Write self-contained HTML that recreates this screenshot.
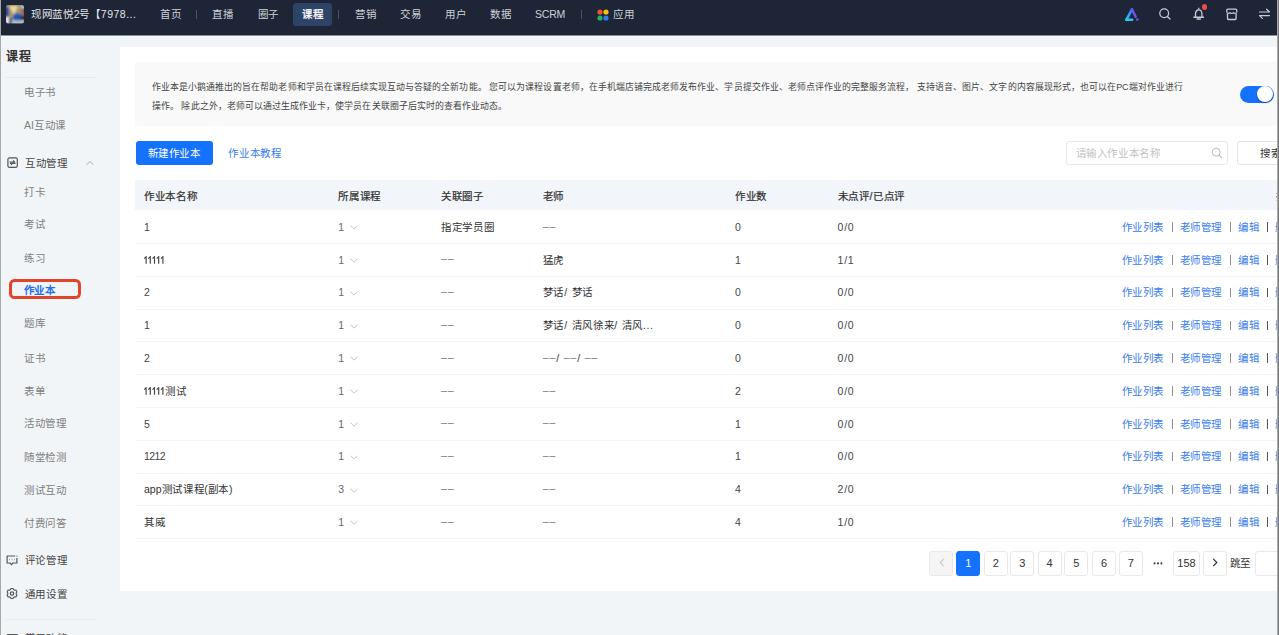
<!DOCTYPE html>
<html lang="zh-CN"><head><meta charset="utf-8">
<style>
*{box-sizing:border-box;margin:0;padding:0}
html,body{width:1279px;height:635px;overflow:hidden}
body{position:relative;background:#f2f5f8;font-family:"Liberation Sans",sans-serif;color:#333;font-size:10.5px;letter-spacing:0.66px}
.a{position:absolute;white-space:nowrap}
.t{position:absolute;white-space:nowrap;line-height:14px;height:14px;margin-top:-0.2px}
#nav{position:absolute;left:0;top:0;width:1279px;height:35px;background:#1d2536}
.nv{position:absolute;top:6.5px;margin-top:0.3px;line-height:14px;font-size:10.5px;letter-spacing:0.66px;color:#cdd1d8}
.sep{position:absolute;top:10px;width:1px;height:9px;background:#4a5263}
.side{color:#808080}
.grp{color:#444}
#card{position:absolute;left:120px;top:47px;width:1157px;height:543.5px;background:#fff}
#desc{position:absolute;left:135px;top:62px;width:1142px;height:63.5px;background:#f9f9f9}
.row{position:absolute;left:135px;width:1142px;height:32.86px;border-bottom:1px solid #f0f0f0}
.cell{position:absolute;white-space:nowrap;line-height:14px;color:#333;margin-top:0.1px}
.hd{-webkit-text-stroke:0.22px #333}
.dd{letter-spacing:0.9px;position:relative;top:-1.2px;color:#777}
.sl{letter-spacing:0.8px}
.lk{color:#3b7cf0}
.pipe{position:absolute;width:1.4px;height:9.5px;background:#929292}
.pg{position:absolute;top:551px;height:24.5px;width:24px;border:1px solid #e9e9e9;border-radius:3px;background:#fff;text-align:center;line-height:22.5px;font-size:11px;letter-spacing:0;color:#333}
</style></head><body>

<!-- NAV -->
<div id="nav">
  <svg class="a" style="left:6px;top:5px" width="18" height="18.5" viewBox="0 0 18 18.5">
    <defs><filter id="bl" filterUnits="userSpaceOnUse" x="-2" y="-2" width="22" height="22.5"><feGaussianBlur stdDeviation="0.9"/></filter><clipPath id="cp"><rect x="0" y="0" width="18" height="18.5" rx="2"/></clipPath></defs>
    <g clip-path="url(#cp)"><g filter="url(#bl)">
    <rect x="-1" y="-1" width="20" height="20.5" fill="#a8946c"/>
    <polygon points="3,1 12,1 8,10" fill="#e6d8a6"/>
    <rect x="-1" y="2" width="4" height="11" fill="#2c4d9c"/>
    <rect x="-1" y="12" width="4" height="7" fill="#e6ecf6"/>
    <ellipse cx="11.5" cy="12" rx="4.8" ry="3.8" fill="#1d58b8"/>
    <rect x="15" y="2" width="4" height="9" fill="#8a6c60"/>
    <rect x="15" y="1" width="4" height="2" fill="#c8d8f0"/>
    <rect x="14.5" y="11" width="4.5" height="4" fill="#1b2234"/>
    <rect x="5" y="15.5" width="14" height="4" fill="#b4c0d4"/>
    <rect x="3" y="13" width="2.5" height="6" fill="#24355e"/>
    </g></g>
  </svg>
  <div class="nv" style="left:31px;top:6.5px;color:#e4e6ea">现网蓝悦<span style="letter-spacing:0">2</span>号【<span style="letter-spacing:0.5px">7978...</span></div>
  <div class="nv" style="left:160px">首页</div>
  <div class="sep" style="left:196px"></div>
  <div class="nv" style="left:212px">直播</div>
  <div class="nv" style="left:257.5px">圈子</div>
  <div class="a" style="left:293px;top:2.5px;width:38.5px;height:23.5px;border-radius:3.5px;background:#2e4467"></div>
  <div class="nv" style="left:302px;color:#fff;-webkit-text-stroke:0.3px #fff">课程</div>
  <div class="sep" style="left:338px"></div>
  <div class="nv" style="left:355px">营销</div>
  <div class="nv" style="left:400px">交易</div>
  <div class="nv" style="left:445px">用户</div>
  <div class="nv" style="left:490px">数据</div>
  <div class="nv" style="left:535px;margin-top:0.4px;letter-spacing:-0.2px">SCRM</div>
  <div class="sep" style="left:581px"></div>
  <svg class="a" style="left:597px;top:9px" width="12" height="12" viewBox="0 0 12 12">
    <circle cx="3" cy="3" r="2.6" fill="#f0533a"/><circle cx="9" cy="3" r="2.6" fill="#f7c100"/>
    <circle cx="3" cy="9" r="2.6" fill="#21b35b"/><circle cx="9" cy="9" r="2.6" fill="#2f7bf5"/>
  </svg>
  <div class="nv" style="left:613px">应用</div>

  <!-- right icons -->
  <svg class="a" style="left:1124px;top:7px" width="16" height="15" viewBox="0 0 16 15">
    <defs><linearGradient id="lg" x1="0" y1="1" x2="1" y2="0"><stop offset="0" stop-color="#22d0f7"/><stop offset="1" stop-color="#4a6cf6"/></linearGradient></defs>
    <defs><linearGradient id="lg2" x1="0" y1="0" x2="0" y2="1"><stop offset="0" stop-color="#5a5cf6"/><stop offset="1" stop-color="#7a48f2"/></linearGradient></defs>
    <path d="M2.4 12.8 L7.9 2.4" fill="none" stroke="url(#lg)" stroke-width="2.5" stroke-linecap="round"/>
    <path d="M7.9 2.4 L11.6 9.6" fill="none" stroke="url(#lg2)" stroke-width="2.5" stroke-linecap="round"/>
    <path d="M2.4 12.8 L8.2 12.8" fill="none" stroke="#25c6f6" stroke-width="2.5" stroke-linecap="round"/>
    <circle cx="13.3" cy="12.5" r="1.35" fill="#7b4cf4"/>
  </svg>
  <svg class="a" style="left:1158px;top:7px" width="14" height="14" viewBox="0 0 14 14">
    <circle cx="6.2" cy="6.3" r="4.4" fill="none" stroke="#c9ccd1" stroke-width="1.3"/>
    <path d="M9.4 9.5 L12 12" stroke="#c9ccd1" stroke-width="1.3" stroke-linecap="round"/>
  </svg>
  <svg class="a" style="left:1192px;top:7px" width="14" height="14" viewBox="0 0 14 14">
    <path d="M6.7 1.1 L6.7 2.4" stroke="#c9ccd1" stroke-width="1.2" stroke-linecap="round"/>
    <path d="M3.5 10 L3.5 7 C3.5 4.5 4.9 2.9 6.7 2.9 C8.5 2.9 9.9 4.5 9.9 7 L9.9 10" fill="none" stroke="#c9ccd1" stroke-width="1.3"/>
    <path d="M1.9 10.3 L11.5 10.3" stroke="#c9ccd1" stroke-width="1.4" stroke-linecap="round"/>
    <path d="M5.1 12.1 L8.3 12.1" stroke="#c9ccd1" stroke-width="1.5" stroke-linecap="round"/>
  </svg>
  <div class="a" style="left:1201.6px;top:4.2px;width:5.4px;height:5.4px;border-radius:50%;background:#f04b4b"></div>
  <svg class="a" style="left:1225px;top:8px" width="13" height="13" viewBox="0 0 13 13">
    <path d="M1.8 4.6 L1.8 2.4 Q1.8 1.2 3 1.2 L10.6 1.2 Q11.8 1.2 11.8 2.4 L11.8 4.6" fill="none" stroke="#c9ccd1" stroke-width="1.3"/>
    <path d="M1.8 4.6 Q3.4 6.3 5 4.6 Q6.8 6.3 8.5 4.6 Q10.2 6.3 11.8 4.6" fill="none" stroke="#c9ccd1" stroke-width="1.2"/>
    <path d="M2.5 5.8 L2.5 10.6 Q2.5 11.5 3.4 11.5 L10.2 11.5 Q11.1 11.5 11.1 10.6 L11.1 5.8" fill="none" stroke="#c9ccd1" stroke-width="1.3"/>
  </svg>
  <svg class="a" style="left:1258px;top:8px" width="13" height="12" viewBox="0 0 13 12">
    <path d="M1.5 4 L11.5 4 L8.6 1.2" fill="none" stroke="#c9ccd1" stroke-width="1.2" stroke-linecap="round" stroke-linejoin="round"/>
    <path d="M11.5 7.6 L1.5 7.6 L4.4 10.4" fill="none" stroke="#c9ccd1" stroke-width="1.2" stroke-linecap="round" stroke-linejoin="round"/>
  </svg>
</div>
<div class="a" style="left:0;top:35px;width:1279px;height:1px;background:#8a8f9a"></div>
<div class="a" style="left:0;top:36px;width:1279px;height:1px;background:#fafcff"></div>

<!-- SIDEBAR -->
<div class="t grp" style="left:6.3px;top:50px;font-size:12px;letter-spacing:0.43px;font-weight:bold;color:#333">课程</div>
<div class="a" style="left:6px;top:77px;width:91px;height:1px;background:#e6e9ec"></div>
<div class="t side" style="left:24px;top:85px">电子书</div>
<div class="t side" style="left:24px;top:118px"><span style="letter-spacing:0">AI</span>互动课</div>
<svg class="a" style="left:6.5px;top:156.7px" width="11" height="11" viewBox="0 0 11 11">
  <rect x="0.9" y="0.9" width="9.4" height="9.4" rx="1.6" fill="none" stroke="#555" stroke-width="1.2"/>
  <path d="M2.5 5 L8 5 M8.5 6.4 L3 6.4" stroke="#555" stroke-width="1.1"/><path d="M5.9 2.7 L8.5 5.3 L5.9 5.3 Z M5.1 8.7 L2.5 6.1 L5.1 6.1 Z" fill="#555"/>
</svg>
<div class="t grp" style="left:24.9px;top:156px">互动管理</div>
<svg class="a" style="left:86px;top:160px" width="8" height="6" viewBox="0 0 8 6"><path d="M0.7 4.8 L4 1.4 L7.3 4.8" fill="none" stroke="#aaa" stroke-width="1"/></svg>
<div class="t side" style="left:24px;top:185px">打卡</div>
<div class="t side" style="left:24px;top:217.3px">考试</div>
<div class="t side" style="left:24px;top:251px">练习</div>
<div class="a" style="left:9px;top:279px;width:71.5px;height:20px;border:3px solid #e2442a;border-radius:5.5px"></div>
<div class="t" style="left:23.8px;top:283.5px;color:#1f6ff2;font-weight:bold">作业本</div>
<div class="t side" style="left:24px;top:316.5px">题库</div>
<div class="t side" style="left:24px;top:350.7px">证书</div>
<div class="t side" style="left:24px;top:383.8px">表单</div>
<div class="t side" style="left:24px;top:416.5px">活动管理</div>
<div class="t side" style="left:24px;top:450px">随堂检测</div>
<div class="t side" style="left:24px;top:483px">测试互动</div>
<div class="t side" style="left:24px;top:516.3px">付费问答</div>
<svg class="a" style="left:6px;top:555px" width="12" height="11" viewBox="0 0 12 11">
  <path d="M9.2 1 L1.1 1 L1.1 8 L4 8 L5.5 9.6 L7 8 L10.9 8 L10.9 3" fill="none" stroke="#555" stroke-width="1.2" stroke-linejoin="round"/>
  <circle cx="10.9" cy="1.1" r="0.7" fill="#666"/>
  <path d="M3.5 4.5 L3.9 4.5 M5.8 4.5 L6.2 4.5 M8.1 4.5 L8.5 4.5" stroke="#444" stroke-width="1.3"/>
</svg>
<div class="t grp" style="left:24.7px;top:553.4px">评论管理</div>
<svg class="a" style="left:6px;top:588px" width="12" height="11" viewBox="0 0 12 11">
  <path d="M10.23 6.25 L10.92 7.19 L9.92 8.91 L8.76 8.79 L7.47 9.54 L6.99 10.60 L5.01 10.60 L4.53 9.54 L3.24 8.79 L2.08 8.91 L1.08 7.19 L1.77 6.25 L1.77 4.75 L1.08 3.81 L2.08 2.09 L3.24 2.21 L4.53 1.46 L5.01 0.40 L6.99 0.40 L7.47 1.46 L8.76 2.21 L9.92 2.09 L10.92 3.81 L10.23 4.75 Z" fill="none" stroke="#555" stroke-width="1.1" stroke-linejoin="round"/>
  <circle cx="6" cy="5.5" r="1.7" fill="none" stroke="#555" stroke-width="1.2"/>
</svg>
<div class="t grp" style="left:24.7px;top:586.7px">通用设置</div>
<div class="a" style="left:6px;top:619px;width:91px;height:1px;background:#e6e9ec"></div>
<svg class="a" style="left:7px;top:633.5px" width="11" height="3" viewBox="0 0 11 3"><rect x="0.6" y="0.6" width="9.5" height="4" fill="none" stroke="#555" stroke-width="1.2"/></svg>
<div class="t grp" style="left:24.7px;top:631.5px">常用功能</div>

<!-- CARD -->
<div id="card"></div>
<div id="desc"></div>
<div class="t" style="left:151.8px;top:80.5px;font-size:8.88px;color:#444;letter-spacing:0.05px">作业本是小鹅通推出的旨在帮助老师和学员在课程后续实现互动与答疑的全新功能。 您可以为课程设置老师，在手机端店铺完成老师发布作业、学员提交作业、老师点评作业的完整服务流程， 支持语音、图片、文字的内容展现形式，也可以在PC端对作业进行</div>
<div class="t" style="left:151.8px;top:99px;font-size:8.88px;color:#444;letter-spacing:0.05px">操作。 除此之外，老师可以通过生成作业卡，使学员在关联圈子后实时的查看作业动态。</div>
<!-- toggle -->
<div class="a" style="left:1240px;top:85.5px;width:34px;height:17px;border-radius:9px;background:#1472ff"></div>
<div class="a" style="left:1257px;top:86px;width:16px;height:16px;border-radius:50%;background:#fff;box-shadow:0 1px 2px rgba(0,0,0,.35)"></div>

<!-- toolbar -->
<div class="a" style="left:135.5px;top:141px;width:77px;height:24px;border-radius:3px;background:#1472ff"></div>
<div class="t" style="left:147.5px;top:146px;color:#fff">新建作业本</div>
<div class="t" style="left:228.3px;top:146px;color:#3b7cf0">作业本教程</div>
<div class="a" style="left:1066px;top:141px;width:162px;height:24px;border:1px solid #e8e8e8;border-radius:3px;background:#fff"></div>
<div class="t" style="left:1075.5px;top:146px;color:#c2c2c2">请输入作业本名称</div>
<svg class="a" style="left:1211px;top:147px" width="12" height="12" viewBox="0 0 12 12">
  <circle cx="5.2" cy="5.2" r="4" fill="none" stroke="#b8b8b8" stroke-width="1"/>
  <path d="M8.1 8.1 L10.6 10.6" stroke="#b8b8b8" stroke-width="1.1" stroke-linecap="round"/>
</svg>
<div class="a" style="left:1236.5px;top:141px;width:60px;height:24px;border:1px solid #e3e3e3;border-radius:3px;background:#fff"></div>
<div class="t" style="left:1260px;top:146px;color:#333">搜索</div>

<!-- TABLE -->
<div class="a" style="left:135px;top:180px;width:1142px;height:30.2px;background:#f2f5f9"></div>
<div class="cell hd" style="left:144px;top:188.5px;color:#333">作业本名称</div>
<div class="cell hd" style="left:338.3px;top:188.5px;">所属课程</div>
<div class="cell hd" style="left:441px;top:188.5px;">关联圈子</div>
<div class="cell hd" style="left:542.8px;top:188.5px;">老师</div>
<div class="cell hd" style="left:735px;top:188.5px;">作业数</div>
<div class="cell hd" style="left:837.5px;top:188.5px;">未点评/已点评</div>
<div class="cell hd" style="left:1275.5px;top:188.5px;">操作</div>

<div id="rows"></div>
<div class="a" style="left:135px;top:243px;width:1142px;height:1px;background:#f2f3f5"></div>
<div class="cell" style="left:144px;top:219.70px;margin-top:0.2px;letter-spacing:0;color:#444">1</div>
<div class="cell" style="left:338.3px;top:219.70px;margin-top:0.2px;letter-spacing:0;color:#444;color:#666">1</div>
<svg class="a" style="left:349.5px;top:225.20px" width="8" height="5" viewBox="0 0 8 5"><path d="M0.5 0.6 L4 4.2 L7.5 0.6" fill="none" stroke="#c0c0c0" stroke-width="0.9"/></svg>
<div class="cell" style="left:441px;top:219.70px">指定学员圈</div>
<div class="cell" style="left:542.8px;top:219.70px"><span class="dd">––</span></div>
<div class="cell" style="left:735px;top:219.70px;margin-top:0.2px;letter-spacing:0;color:#444">0</div>
<div class="cell" style="left:837.5px;top:219.70px;margin-top:0.2px;letter-spacing:0.8px;color:#444">0/0</div>
<div class="cell lk" style="left:1121.5px;top:219.70px">作业列表</div>
<div class="pipe" style="left:1171.5px;top:222.20px"></div>
<div class="cell lk" style="left:1179.5px;top:219.70px">老师管理</div>
<div class="pipe" style="left:1230px;top:222.20px"></div>
<div class="cell lk" style="left:1238.3px;top:219.70px">编辑</div>
<div class="pipe" style="left:1267px;top:222.20px;background:#555"></div>
<div class="cell lk" style="left:1275px;top:219.70px">删除</div>
<div class="a" style="left:135px;top:276px;width:1142px;height:1px;background:#f2f3f5"></div>
<div class="cell" style="left:144px;top:252.50px;margin-top:0.2px;letter-spacing:0;color:#444"><svg width="21" height="9" viewBox="0 0 21 9" style="vertical-align:-1.4px;margin-right:0.3px"><path d="M0.10 2.6 L2.10 0.7 L2.10 7.7 M4.30 2.6 L6.30 0.7 L6.30 7.7 M8.50 2.6 L10.50 0.7 L10.50 7.7 M12.70 2.6 L14.70 0.7 L14.70 7.7 M16.90 2.6 L18.90 0.7 L18.90 7.7 " fill="none" stroke="#444" stroke-width="1.15" stroke-linejoin="miter"/></svg></div>
<div class="cell" style="left:338.3px;top:252.50px;margin-top:0.2px;letter-spacing:0;color:#444;color:#666">1</div>
<svg class="a" style="left:349.5px;top:258.00px" width="8" height="5" viewBox="0 0 8 5"><path d="M0.5 0.6 L4 4.2 L7.5 0.6" fill="none" stroke="#c0c0c0" stroke-width="0.9"/></svg>
<div class="cell" style="left:441px;top:252.50px"><span class="dd">––</span></div>
<div class="cell" style="left:542.8px;top:252.50px">猛虎</div>
<div class="cell" style="left:735px;top:252.50px;margin-top:0.2px;letter-spacing:0;color:#444">1</div>
<div class="cell" style="left:837.5px;top:252.50px;margin-top:0.2px;letter-spacing:0.8px;color:#444">1/1</div>
<div class="cell lk" style="left:1121.5px;top:252.50px">作业列表</div>
<div class="pipe" style="left:1171.5px;top:255.00px"></div>
<div class="cell lk" style="left:1179.5px;top:252.50px">老师管理</div>
<div class="pipe" style="left:1230px;top:255.00px"></div>
<div class="cell lk" style="left:1238.3px;top:252.50px">编辑</div>
<div class="pipe" style="left:1267px;top:255.00px;background:#555"></div>
<div class="cell lk" style="left:1275px;top:252.50px">删除</div>
<div class="a" style="left:135px;top:309px;width:1142px;height:1px;background:#f2f3f5"></div>
<div class="cell" style="left:144px;top:285.30px;margin-top:0.2px;letter-spacing:0;color:#444">2</div>
<div class="cell" style="left:338.3px;top:285.30px;margin-top:0.2px;letter-spacing:0;color:#444;color:#666">1</div>
<svg class="a" style="left:349.5px;top:290.80px" width="8" height="5" viewBox="0 0 8 5"><path d="M0.5 0.6 L4 4.2 L7.5 0.6" fill="none" stroke="#c0c0c0" stroke-width="0.9"/></svg>
<div class="cell" style="left:441px;top:285.30px"><span class="dd">––</span></div>
<div class="cell" style="left:542.8px;top:285.30px">梦话<span class="sl">/ </span>梦话</div>
<div class="cell" style="left:735px;top:285.30px;margin-top:0.2px;letter-spacing:0;color:#444">0</div>
<div class="cell" style="left:837.5px;top:285.30px;margin-top:0.2px;letter-spacing:0.8px;color:#444">0/0</div>
<div class="cell lk" style="left:1121.5px;top:285.30px">作业列表</div>
<div class="pipe" style="left:1171.5px;top:287.80px"></div>
<div class="cell lk" style="left:1179.5px;top:285.30px">老师管理</div>
<div class="pipe" style="left:1230px;top:287.80px"></div>
<div class="cell lk" style="left:1238.3px;top:285.30px">编辑</div>
<div class="pipe" style="left:1267px;top:287.80px;background:#555"></div>
<div class="cell lk" style="left:1275px;top:285.30px">删除</div>
<div class="a" style="left:135px;top:341px;width:1142px;height:1px;background:#f2f3f5"></div>
<div class="cell" style="left:144px;top:318.10px;margin-top:0.2px;letter-spacing:0;color:#444">1</div>
<div class="cell" style="left:338.3px;top:318.10px;margin-top:0.2px;letter-spacing:0;color:#444;color:#666">1</div>
<svg class="a" style="left:349.5px;top:323.60px" width="8" height="5" viewBox="0 0 8 5"><path d="M0.5 0.6 L4 4.2 L7.5 0.6" fill="none" stroke="#c0c0c0" stroke-width="0.9"/></svg>
<div class="cell" style="left:441px;top:318.10px"><span class="dd">––</span></div>
<div class="cell" style="left:542.8px;top:318.10px">梦话<span class="sl">/ </span>清风徐来<span class="sl">/ </span>清风...</div>
<div class="cell" style="left:735px;top:318.10px;margin-top:0.2px;letter-spacing:0;color:#444">0</div>
<div class="cell" style="left:837.5px;top:318.10px;margin-top:0.2px;letter-spacing:0.8px;color:#444">0/0</div>
<div class="cell lk" style="left:1121.5px;top:318.10px">作业列表</div>
<div class="pipe" style="left:1171.5px;top:320.60px"></div>
<div class="cell lk" style="left:1179.5px;top:318.10px">老师管理</div>
<div class="pipe" style="left:1230px;top:320.60px"></div>
<div class="cell lk" style="left:1238.3px;top:318.10px">编辑</div>
<div class="pipe" style="left:1267px;top:320.60px;background:#555"></div>
<div class="cell lk" style="left:1275px;top:318.10px">删除</div>
<div class="a" style="left:135px;top:374px;width:1142px;height:1px;background:#f2f3f5"></div>
<div class="cell" style="left:144px;top:350.90px;margin-top:0.2px;letter-spacing:0;color:#444">2</div>
<div class="cell" style="left:338.3px;top:350.90px;margin-top:0.2px;letter-spacing:0;color:#444;color:#666">1</div>
<svg class="a" style="left:349.5px;top:356.40px" width="8" height="5" viewBox="0 0 8 5"><path d="M0.5 0.6 L4 4.2 L7.5 0.6" fill="none" stroke="#c0c0c0" stroke-width="0.9"/></svg>
<div class="cell" style="left:441px;top:350.90px"><span class="dd">––</span></div>
<div class="cell" style="left:542.8px;top:350.90px"><span class="dd">––</span><span class="sl">/ </span><span class="dd">––</span><span class="sl">/ </span><span class="dd">––</span></div>
<div class="cell" style="left:735px;top:350.90px;margin-top:0.2px;letter-spacing:0;color:#444">0</div>
<div class="cell" style="left:837.5px;top:350.90px;margin-top:0.2px;letter-spacing:0.8px;color:#444">0/0</div>
<div class="cell lk" style="left:1121.5px;top:350.90px">作业列表</div>
<div class="pipe" style="left:1171.5px;top:353.40px"></div>
<div class="cell lk" style="left:1179.5px;top:350.90px">老师管理</div>
<div class="pipe" style="left:1230px;top:353.40px"></div>
<div class="cell lk" style="left:1238.3px;top:350.90px">编辑</div>
<div class="pipe" style="left:1267px;top:353.40px;background:#555"></div>
<div class="cell lk" style="left:1275px;top:350.90px">删除</div>
<div class="a" style="left:135px;top:407px;width:1142px;height:1px;background:#f2f3f5"></div>
<div class="cell" style="left:144px;top:383.70px"><svg width="21" height="9" viewBox="0 0 21 9" style="vertical-align:-1.4px;margin-right:0.3px"><path d="M0.10 2.6 L2.10 0.7 L2.10 7.7 M4.30 2.6 L6.30 0.7 L6.30 7.7 M8.50 2.6 L10.50 0.7 L10.50 7.7 M12.70 2.6 L14.70 0.7 L14.70 7.7 M16.90 2.6 L18.90 0.7 L18.90 7.7 " fill="none" stroke="#444" stroke-width="1.15" stroke-linejoin="miter"/></svg>测试</div>
<div class="cell" style="left:338.3px;top:383.70px;margin-top:0.2px;letter-spacing:0;color:#444;color:#666">1</div>
<svg class="a" style="left:349.5px;top:389.20px" width="8" height="5" viewBox="0 0 8 5"><path d="M0.5 0.6 L4 4.2 L7.5 0.6" fill="none" stroke="#c0c0c0" stroke-width="0.9"/></svg>
<div class="cell" style="left:441px;top:383.70px"><span class="dd">––</span></div>
<div class="cell" style="left:542.8px;top:383.70px"><span class="dd">––</span></div>
<div class="cell" style="left:735px;top:383.70px;margin-top:0.2px;letter-spacing:0;color:#444">2</div>
<div class="cell" style="left:837.5px;top:383.70px;margin-top:0.2px;letter-spacing:0.8px;color:#444">0/0</div>
<div class="cell lk" style="left:1121.5px;top:383.70px">作业列表</div>
<div class="pipe" style="left:1171.5px;top:386.20px"></div>
<div class="cell lk" style="left:1179.5px;top:383.70px">老师管理</div>
<div class="pipe" style="left:1230px;top:386.20px"></div>
<div class="cell lk" style="left:1238.3px;top:383.70px">编辑</div>
<div class="pipe" style="left:1267px;top:386.20px;background:#555"></div>
<div class="cell lk" style="left:1275px;top:383.70px">删除</div>
<div class="a" style="left:135px;top:440px;width:1142px;height:1px;background:#f2f3f5"></div>
<div class="cell" style="left:144px;top:416.50px;margin-top:0.2px;letter-spacing:0;color:#444">5</div>
<div class="cell" style="left:338.3px;top:416.50px;margin-top:0.2px;letter-spacing:0;color:#444;color:#666">1</div>
<svg class="a" style="left:349.5px;top:422.00px" width="8" height="5" viewBox="0 0 8 5"><path d="M0.5 0.6 L4 4.2 L7.5 0.6" fill="none" stroke="#c0c0c0" stroke-width="0.9"/></svg>
<div class="cell" style="left:441px;top:416.50px"><span class="dd">––</span></div>
<div class="cell" style="left:542.8px;top:416.50px"><span class="dd">––</span></div>
<div class="cell" style="left:735px;top:416.50px;margin-top:0.2px;letter-spacing:0;color:#444">1</div>
<div class="cell" style="left:837.5px;top:416.50px;margin-top:0.2px;letter-spacing:0.8px;color:#444">0/0</div>
<div class="cell lk" style="left:1121.5px;top:416.50px">作业列表</div>
<div class="pipe" style="left:1171.5px;top:419.00px"></div>
<div class="cell lk" style="left:1179.5px;top:416.50px">老师管理</div>
<div class="pipe" style="left:1230px;top:419.00px"></div>
<div class="cell lk" style="left:1238.3px;top:416.50px">编辑</div>
<div class="pipe" style="left:1267px;top:419.00px;background:#555"></div>
<div class="cell lk" style="left:1275px;top:416.50px">删除</div>
<div class="a" style="left:135px;top:473px;width:1142px;height:1px;background:#f2f3f5"></div>
<div class="cell" style="left:144px;top:449.30px;margin-top:0.2px;letter-spacing:-0.6px;color:#444">1212</div>
<div class="cell" style="left:338.3px;top:449.30px;margin-top:0.2px;letter-spacing:0;color:#444;color:#666">1</div>
<svg class="a" style="left:349.5px;top:454.80px" width="8" height="5" viewBox="0 0 8 5"><path d="M0.5 0.6 L4 4.2 L7.5 0.6" fill="none" stroke="#c0c0c0" stroke-width="0.9"/></svg>
<div class="cell" style="left:441px;top:449.30px"><span class="dd">––</span></div>
<div class="cell" style="left:542.8px;top:449.30px"><span class="dd">––</span></div>
<div class="cell" style="left:735px;top:449.30px;margin-top:0.2px;letter-spacing:0;color:#444">1</div>
<div class="cell" style="left:837.5px;top:449.30px;margin-top:0.2px;letter-spacing:0.8px;color:#444">0/0</div>
<div class="cell lk" style="left:1121.5px;top:449.30px">作业列表</div>
<div class="pipe" style="left:1171.5px;top:451.80px"></div>
<div class="cell lk" style="left:1179.5px;top:449.30px">老师管理</div>
<div class="pipe" style="left:1230px;top:451.80px"></div>
<div class="cell lk" style="left:1238.3px;top:449.30px">编辑</div>
<div class="pipe" style="left:1267px;top:451.80px;background:#555"></div>
<div class="cell lk" style="left:1275px;top:449.30px">删除</div>
<div class="a" style="left:135px;top:505px;width:1142px;height:1px;background:#f2f3f5"></div>
<div class="cell" style="left:144px;top:482.10px"><span style="letter-spacing:0">app</span>测试课程<span style="letter-spacing:0">(</span>副本)</div>
<div class="cell" style="left:338.3px;top:482.10px;margin-top:0.2px;letter-spacing:0;color:#444;color:#666">3</div>
<svg class="a" style="left:349.5px;top:487.60px" width="8" height="5" viewBox="0 0 8 5"><path d="M0.5 0.6 L4 4.2 L7.5 0.6" fill="none" stroke="#c0c0c0" stroke-width="0.9"/></svg>
<div class="cell" style="left:441px;top:482.10px"><span class="dd">––</span></div>
<div class="cell" style="left:542.8px;top:482.10px"><span class="dd">––</span></div>
<div class="cell" style="left:735px;top:482.10px;margin-top:0.2px;letter-spacing:0;color:#444">4</div>
<div class="cell" style="left:837.5px;top:482.10px;margin-top:0.2px;letter-spacing:0.8px;color:#444">2/0</div>
<div class="cell lk" style="left:1121.5px;top:482.10px">作业列表</div>
<div class="pipe" style="left:1171.5px;top:484.60px"></div>
<div class="cell lk" style="left:1179.5px;top:482.10px">老师管理</div>
<div class="pipe" style="left:1230px;top:484.60px"></div>
<div class="cell lk" style="left:1238.3px;top:482.10px">编辑</div>
<div class="pipe" style="left:1267px;top:484.60px;background:#555"></div>
<div class="cell lk" style="left:1275px;top:482.10px">删除</div>
<div class="a" style="left:135px;top:538px;width:1142px;height:1px;background:#f2f3f5"></div>
<div class="cell" style="left:144px;top:514.90px">其威</div>
<div class="cell" style="left:338.3px;top:514.90px;margin-top:0.2px;letter-spacing:0;color:#444;color:#666">1</div>
<svg class="a" style="left:349.5px;top:520.40px" width="8" height="5" viewBox="0 0 8 5"><path d="M0.5 0.6 L4 4.2 L7.5 0.6" fill="none" stroke="#c0c0c0" stroke-width="0.9"/></svg>
<div class="cell" style="left:441px;top:514.90px"><span class="dd">––</span></div>
<div class="cell" style="left:542.8px;top:514.90px"><span class="dd">––</span></div>
<div class="cell" style="left:735px;top:514.90px;margin-top:0.2px;letter-spacing:0;color:#444">4</div>
<div class="cell" style="left:837.5px;top:514.90px;margin-top:0.2px;letter-spacing:0.8px;color:#444">1/0</div>
<div class="cell lk" style="left:1121.5px;top:514.90px">作业列表</div>
<div class="pipe" style="left:1171.5px;top:517.40px"></div>
<div class="cell lk" style="left:1179.5px;top:514.90px">老师管理</div>
<div class="pipe" style="left:1230px;top:517.40px"></div>
<div class="cell lk" style="left:1238.3px;top:514.90px">编辑</div>
<div class="pipe" style="left:1267px;top:517.40px;background:#555"></div>
<div class="cell lk" style="left:1275px;top:514.90px">删除</div>

<!-- PAGINATION -->
<div class="pg" style="left:929px;background:#f5f5f5"><svg style="position:absolute;left:8.5px;top:6.3px" width="6" height="9" viewBox="0 0 6 9"><path d="M4.8 0.8 L1.2 4.5 L4.8 8.2" fill="none" stroke="#c8c8c8" stroke-width="1.1"/></svg></div>
<div class="pg" style="left:956.3px;background:#1472ff;border-color:#1472ff;color:#fff">1</div>
<div class="pg" style="left:983.8px">2</div>
<div class="pg" style="left:1010.2px">3</div>
<div class="pg" style="left:1037.5px">4</div>
<div class="pg" style="left:1064.4px">5</div>
<div class="pg" style="left:1092px">6</div>
<div class="pg" style="left:1118.7px">7</div>
<svg class="a" style="left:1152px;top:561px" width="12" height="5" viewBox="0 0 12 5"><circle cx="2.6" cy="2.4" r="1.05" fill="#444"/><circle cx="6" cy="2.4" r="1.05" fill="#444"/><circle cx="9.4" cy="2.4" r="1.05" fill="#444"/></svg>
<div class="pg" style="left:1173.2px;width:26.6px">158</div>
<div class="pg" style="left:1203px"><svg style="position:absolute;left:8.3px;top:6.3px" width="6" height="9" viewBox="0 0 6 9"><path d="M1.2 0.8 L4.8 4.5 L1.2 8.2" fill="none" stroke="#333" stroke-width="1.2"/></svg></div>
<div class="t" style="left:1229.8px;top:556px;color:#333">跳至</div>
<div class="pg" style="left:1254.7px;width:40px"></div>

<!-- borders -->
<div class="a" style="left:0;top:0;width:1px;height:635px;background:#a5a9aa"></div>
<div class="a" style="left:1277px;top:0;width:1px;height:635px;background:#a8a8a8"></div>
<div class="a" style="left:1278px;top:0;width:1px;height:635px;background:#7a7a7a"></div>
</body></html>
